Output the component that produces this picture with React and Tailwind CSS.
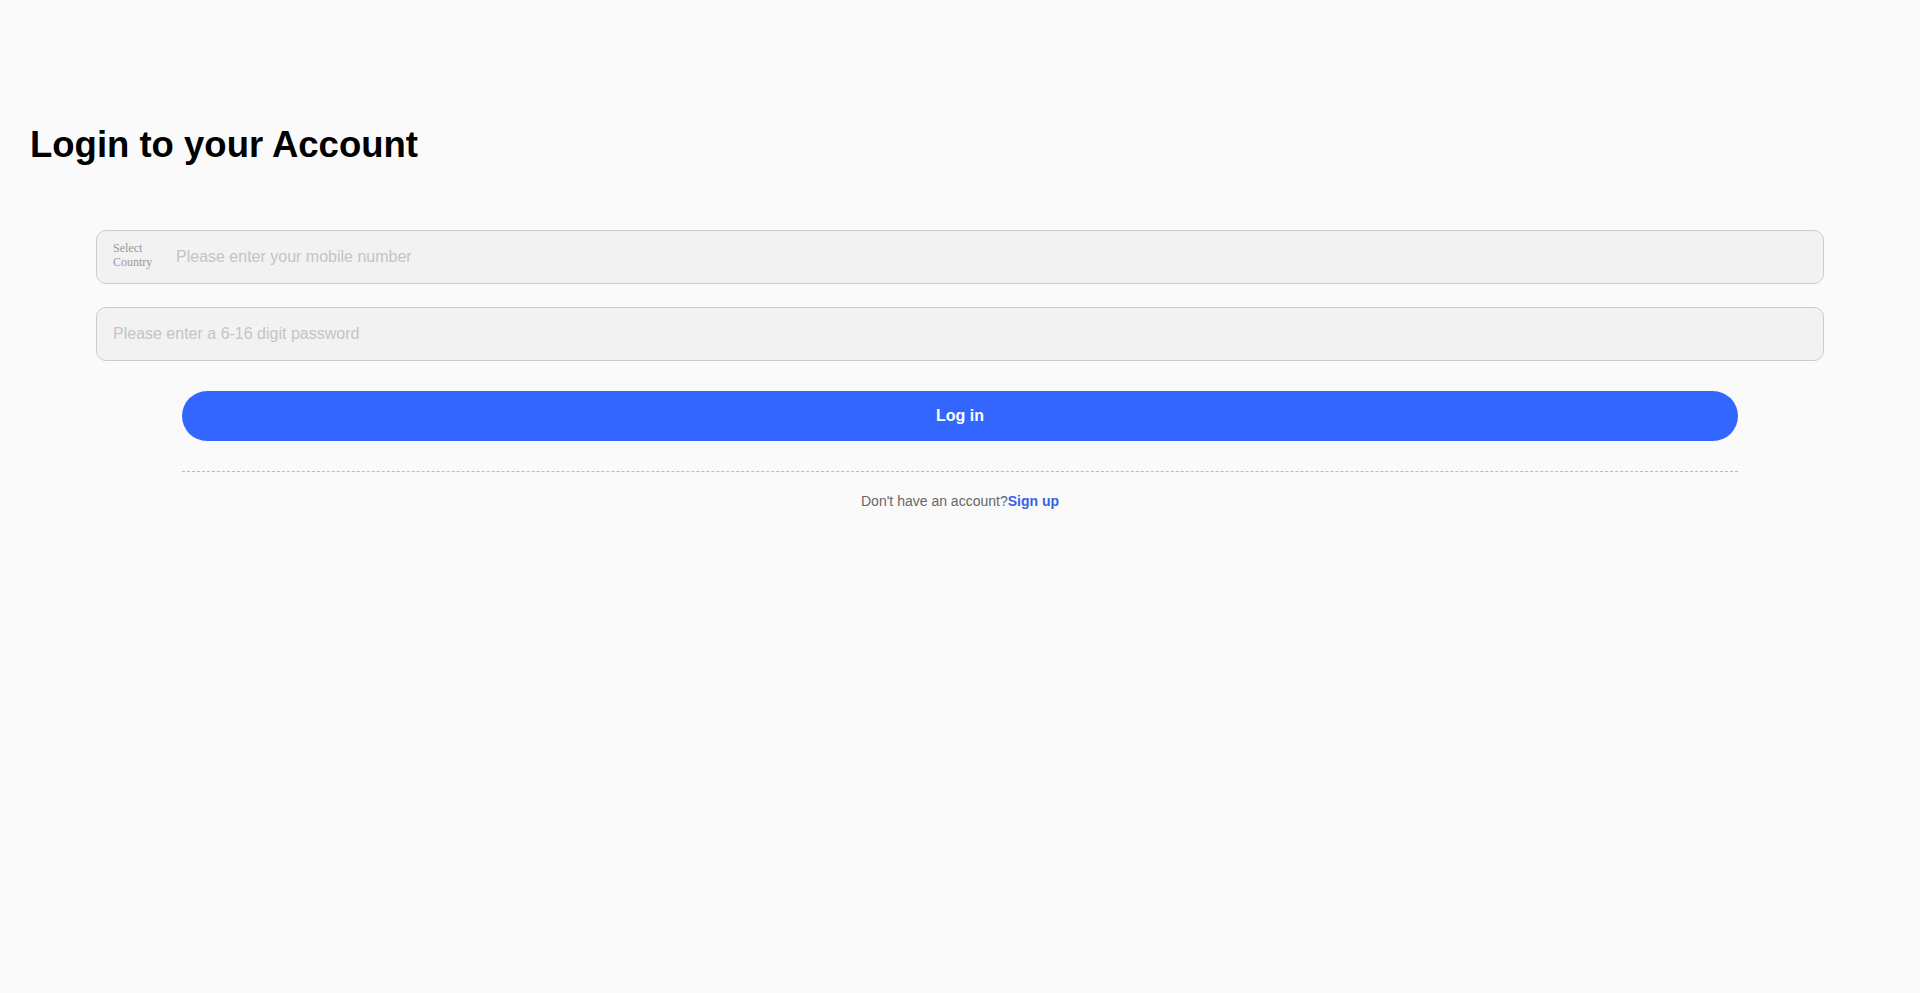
import React, { useState } from 'react';

const Login = () => {
  const [phone, setPhone] = useState('');
  const [password, setPassword] = useState('');

  return (
    <div className="min-h-screen bg-[#fafafa] font-['Liberation_Sans',Arial,sans-serif]">
      <h1 className="pt-[124px] pl-[30px] text-[36.5px] font-bold leading-[41px] text-black">
        Login to your Account
      </h1>

      <div className="px-[96px] mt-[65px]">
        <div className="flex items-center h-[54px] border border-[#cccccc] rounded-[10px] bg-[#f2f2f2] pl-[16px]">
          <div className="w-[40px] shrink-0 -mt-[3px] text-[12px] leading-[13.5px] text-[#999999] font-['Liberation_Serif',serif]">
            <div>Select</div>
            <div>Country</div>
          </div>
          <input
            type="text"
            placeholder="Please enter your mobile number"
            className="flex-1 h-full ml-[23px] bg-transparent outline-none text-[16px] text-[#333] placeholder:text-[#c4c4c4]"
            value={phone}
            onChange={(e) => setPhone(e.target.value)}
          />
        </div>

        <div className="mt-[23px] flex items-center h-[54px] border border-[#cccccc] rounded-[10px] bg-[#f2f2f2] px-[16px]">
          <input
            type="password"
            placeholder="Please enter a 6-16 digit password"
            className="flex-1 h-full bg-transparent outline-none text-[16px] text-[#333] placeholder:text-[#c4c4c4]"
            value={password}
            onChange={(e) => setPassword(e.target.value)}
          />
        </div>

        <div className="w-[90%] mx-auto">
          <button className="mt-[30px] w-full h-[50px] rounded-full bg-[#3366ff] text-white text-[16px] font-bold">
            Log in
          </button>
          <div className="mt-[30px] border-t border-dashed border-[#bbbbbb]"></div>
          <p className="mt-[19px] text-center text-[14px] text-[#666666]">
            Don't have an account?<a href="#" className="font-bold text-[#3462e6]">Sign up</a>
          </p>
        </div>
      </div>
    </div>
  );
};

export default Login;
